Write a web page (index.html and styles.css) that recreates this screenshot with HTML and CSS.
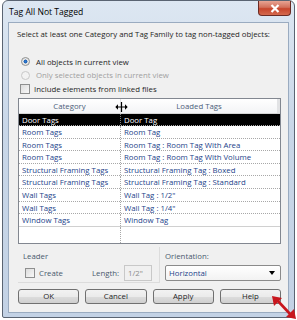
FILE: index.html
```html
<!DOCTYPE html>
<html lang="en">
<head>
    <meta charset="UTF-8">
    <title>Tag All Not Tagged</title>
    <link rel="stylesheet" href="styles.css">
</head>
<body>
    <div class="window">
        <div class="titlebar">
            <span class="title">Tag All Not Tagged</span>
            <div class="close">
                <svg width="12" height="9" viewBox="0 0 12 9"><path d="M2.5 1 L9.5 8 M9.5 1 L2.5 8" stroke="#ffffff" stroke-width="2.2"/></svg>
            </div>
        </div>

        <div class="client">
            <p class="intro">Select at least one Category and Tag Family to tag non-tagged objects:</p>

            <label class="opt first"><span class="radio on"></span>All objects in current view</label>
            <label class="opt disabled"><span class="radio"></span>Only selected objects in current view</label>
            <label class="opt"><span class="check"></span>Include elements from linked files</label>

            <div class="grid">
                <div class="row head">
                    <div class="cell">Category</div>
                    <div class="cell">Loaded Tags</div>
                </div>
                <div class="row selected">
                    <div class="cell">Door Tags</div>
                    <div class="cell">Door Tag</div>
                </div>
                <div class="row"><div class="cell">Room Tags</div><div class="cell">Room Tag</div></div>
                <div class="row"><div class="cell">Room Tags</div><div class="cell">Room Tag : Room Tag With Area</div></div>
                <div class="row"><div class="cell">Room Tags</div><div class="cell">Room Tag : Room Tag With Volume</div></div>
                <div class="row"><div class="cell">Structural Framing Tags</div><div class="cell">Structural Framing Tag : Boxed</div></div>
                <div class="row"><div class="cell">Structural Framing Tags</div><div class="cell">Structural Framing Tag : Standard</div></div>
                <div class="row"><div class="cell">Wall Tags</div><div class="cell">Wall Tag : 1/2"</div></div>
                <div class="row"><div class="cell">Wall Tags</div><div class="cell">Wall Tag : 1/4"</div></div>
                <div class="row last"><div class="cell">Window Tags</div><div class="cell">Window Tag</div></div>
                <div class="row empty"><div class="cell"></div><div class="cell"></div></div>

                <!-- resize cursor over the column divider -->
                <svg class="cursor" width="13" height="10" viewBox="0 0 13 10">
                    <path d="M6.5 0 V10" stroke="#000" stroke-width="1.2"/>
                    <path d="M1 5 H12" stroke="#000" stroke-width="1"/>
                    <path d="M0.3 5 L3 2.3 V7.7 Z M12.7 5 L10 2.3 V7.7 Z" fill="#000"/>
                </svg>
            </div>

            <div class="options">
                <div class="leader">
                    <div class="caption">Leader</div>
                    <div class="fields">
                        <label class="create"><span class="check"></span>Create</label>
                        <span class="len-label">Length:</span>
                        <span class="len-input">1/2"</span>
                    </div>
                </div>
                <div class="orient">
                    <div class="caption">Orientation:</div>
                    <div class="select">
                        <span>Horizontal</span>
                        <svg width="6" height="4" viewBox="0 0 6 4"><path d="M0 0 H6 L3 4 Z" fill="#000"/></svg>
                    </div>
                </div>
            </div>

            <div class="buttons">
                <button class="btn">OK</button>
                <button class="btn">Cancel</button>
                <button class="btn">Apply</button>
                <button class="btn">Help</button>
            </div>
        </div>
    </div>

    <!-- red annotation arrow in the corner -->
    <svg class="arrow" width="26" height="24" viewBox="0 0 26 24">
        <path d="M6 4 L20 19" stroke="#c8161d" stroke-width="2.6"/>
        <path d="M1 0 L11 2 L3 10 Z" fill="#c8161d"/>
        <path d="M25 23 L15 21 L23 13 Z" fill="#c8161d"/>
    </svg>
</body>
</html>
```

FILE: styles.css
```css
body {
    margin: 0;
    padding: 0;
    background: #ffffff;
    font-family: "Open Sans", "Noto Sans", sans-serif;
    font-size: 7.8px;
    color: #1e1e1e;
    position: relative;
    width: 297px;
    height: 320px;
    overflow: hidden;
}

.window {
    box-sizing: border-box;
    width: 293px;
    height: 318px;
    margin-left: 2px;
    border: 1px solid #5a6472;
    border-radius: 6px 6px 2px 2px;
    background: linear-gradient(#dde7f2, #c9d7e8 40%, #c3d2e5);
    display: flex;
    flex-direction: column;
}

.titlebar {
    height: 21px;
    display: flex;
    justify-content: space-between;
    align-items: flex-start;
}

.title {
    margin: 5px 0 0 6px;
    font-size: 8.6px;
    color: #000;
}

.close {
    box-sizing: border-box;
    width: 33px;
    height: 15px;
    margin-right: 3px;
    border: 1px solid #6b2b24;
    border-top: none;
    border-radius: 0 0 4px 4px;
    background: linear-gradient(#e8a493, #d2705b 45%, #c7452c 55%, #d46a4e);
    display: flex;
    align-items: center;
    justify-content: center;
}

.client {
    box-sizing: border-box;
    flex: 1;
    margin: 0 5px 4px 5px;
    border: 1px solid #9aabc0;
    background: #f0f0f0;
    padding: 5px 7px 0 9px;
}

.intro {
    margin: 0 0 0 -1px;
    line-height: 13px;
    white-space: nowrap;
}

.opt {
    display: flex;
    align-items: center;
    height: 13.5px;
    margin-left: 2px;
}

.opt.first {
    margin-top: 14px;
}

.opt.disabled {
    color: #a0a0a0;
}

.radio {
    box-sizing: border-box;
    width: 9px;
    height: 9px;
    border-radius: 50%;
    border: 1px solid #8e8f8f;
    background: radial-gradient(#f4f4f4, #dcdcdc);
    margin-right: 6px;
    margin-left: 1px;
}

.radio.on {
    background: radial-gradient(circle, #2e7ed8 0, #1d5fb0 35%, #e2e2e2 45%, #f4f4f4);
}

.opt.disabled .radio {
    border-color: #c8c8c8;
    background: #f2f2f2;
}

.check {
    box-sizing: border-box;
    width: 10px;
    height: 10px;
    border: 1px solid #8e8f8f;
    background: linear-gradient(135deg, #dcdcdc, #f8f8f8);
    margin-right: 4px;
}

.grid {
    position: relative;
    box-sizing: border-box;
    height: 146px;
    margin-top: 2px;
    border: 1px solid #828790;
    background: #ffffff;
    display: flex;
    flex-direction: column;
}

.row {
    box-sizing: border-box;
    display: grid;
    grid-template-columns: 102px 1fr;
    height: 12.6px;
    line-height: 12px;
    border-bottom: 1px dotted #a8a8a8;
}

.cell {
    padding-left: 3px;
    white-space: nowrap;
    overflow: hidden;
    color: #1c3f8a;
}

.cell:first-child {
    border-right: 1px dotted #a8a8a8;
}

.row.head {
    height: 15px;
    line-height: 14px;
    background: linear-gradient(#ffffff, #f3f4f6);
    border-bottom: 1px solid #d5d5d5;
}

.row.head .cell {
    text-align: center;
    color: #4c607a;
    padding-left: 0;
    border-right-style: solid;
    border-right-color: #e2e3e5;
}

.row.selected {
    background: #000000;
}

.row.selected .cell {
    color: #ffffff;
    border-right-color: #808080;
}

.row.last {
    border-bottom: 1px solid #d0d0d0;
}

.row.empty {
    flex: 1;
    border-bottom: none;
}

.cursor {
    position: absolute;
    left: 96px;
    top: 3px;
}

.options {
    display: flex;
    margin-top: 3px;
}

.caption {
    line-height: 13px;
    color: #4a5a6e;
}

.leader {
    box-sizing: border-box;
    width: 142px;
    height: 36px;
    padding: 3px 0 0 5px;
    border-right: 1px solid #dcdcdc;
    border-bottom: 1px solid #dcdcdc;
}

.fields {
    display: flex;
    align-items: center;
    margin-top: 2px;
    height: 16px;
}

.create {
    display: flex;
    align-items: center;
    margin-left: 2px;
    color: #4a5a6e;
}

.len-label {
    margin-left: 29px;
    color: #4a5a6e;
}

.len-input {
    box-sizing: border-box;
    width: 28px;
    height: 16px;
    margin-left: 5px;
    padding-left: 3px;
    line-height: 14px;
    border: 1px solid #c8c8c8;
    color: #8c8c8c;
}

.orient {
    margin-left: 5px;
    padding-top: 3px;
    flex: 1;
}

.select {
    box-sizing: border-box;
    height: 16px;
    margin-top: 2px;
    border: 1px solid #8b8b8b;
    border-radius: 2px;
    background: linear-gradient(#ffffff, #f2f2f2);
    display: flex;
    align-items: center;
    justify-content: space-between;
    padding: 0 5px 0 3px;
    color: #1c3f8a;
}

.buttons {
    display: flex;
    gap: 6px;
    margin-top: 6px;
}

.btn {
    box-sizing: border-box;
    width: 62px;
    height: 15px;
    padding: 0;
    border: 1px solid #707070;
    border-radius: 3px;
    background: linear-gradient(#f2f2f2, #ebebeb 50%, #dddddd 51%, #cfcfcf);
    font-family: "Open Sans", "Noto Sans", sans-serif;
    font-size: 7.8px;
    line-height: 13px;
    color: #1e1e1e;
}

.arrow {
    position: absolute;
    left: 271px;
    top: 296px;
}
```
